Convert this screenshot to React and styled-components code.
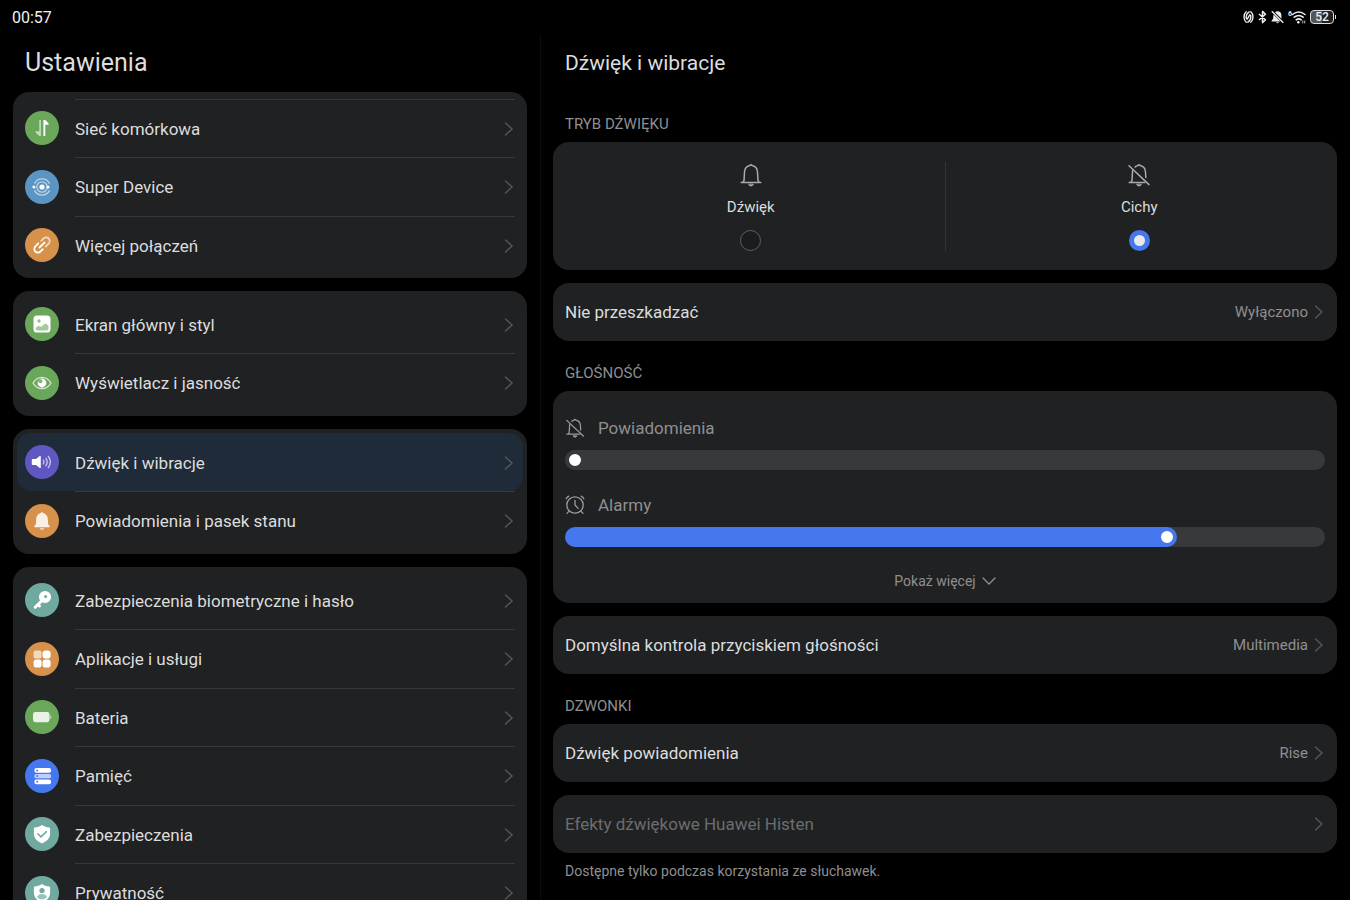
import { useState } from 'react';
import styled, { createGlobalStyle } from 'styled-components';

const GREEN = '#6aa75a';
const ORANGE = '#d6914b';
const TEAL = '#6fa9a0';
const BLUE = '#4577ee';

const MobileDataIcon = () => (
  <svg viewBox="0 0 34 34" fill="#fff">
    <path d="M14.300 9h1.600v16h-1.600c-1.500-1.200-2.700-2.400-3.700-3.600-.5-.7 0-1.200.8-1.200h2.900z" opacity="0.6" />
    <path d="M18.400 9h1.700c1.500 1.200 2.600 2.300 3.600 3.500.5.7 0 1.200-.8 1.200h-2.600V25h-1.900z" />
  </svg>
);

const SuperDeviceIcon = () => (
  <svg viewBox="0 0 34 34" fill="none" stroke="#fff">
    <circle cx="17" cy="17" r="2.600" fill="#fff" stroke="none" />
    <circle cx="17" cy="17" r="5.200" strokeWidth="1.300" opacity="0.6" />
    <path d="M9.500 13.600a8.300 8.300 0 0 1 15 0M9.500 20.400a8.300 8.300 0 0 0 15 0" strokeWidth="1.300" opacity="0.6" />
    <circle cx="8.900" cy="17" r="1.500" fill="#fff" stroke="none" />
    <circle cx="23" cy="17" r="1.500" fill="#fff" stroke="none" />
  </svg>
);

const LinkIcon = () => (
  <svg viewBox="0 0 34 34" fill="none" stroke="#fff" strokeWidth="1.800" strokeLinecap="round">
    <path d="M16.200 12.800l2.300-2.300a3.600 3.600 0 0 1 5.100 5.100l-2.900 2.900" opacity="0.65" />
    <path d="M17.800 21.200l-2.300 2.300a3.600 3.600 0 0 1-5.100-5.100l2.900-2.900" />
    <path d="M14.500 19.500l5-5" />
  </svg>
);

const PictureIcon = () => (
  <svg viewBox="0 0 34 34">
    <rect x="8.500" y="8.500" width="17" height="17" rx="3.600" fill="#fff" />
    <circle cx="14" cy="14" r="1.700" fill={GREEN} opacity="0.7" />
    <path d="M10.500 21.500c1-2 2.500-3.200 4.200-2.300 1.400.7 2.400.3 3.200-.9 1.800-2.600 4.500-1.900 5.600 1v2.200a2 2 0 0 1-2 2h-9a2 2 0 0 1-2-2z" fill={GREEN} opacity="0.6" />
  </svg>
);

const EyeIcon = () => (
  <svg viewBox="0 0 34 34">
    <path d="M8 17c2.300-3.800 5.300-5.700 9-5.700s6.700 1.900 9 5.700c-2.300 3.800-5.300 5.700-9 5.700S10.300 20.800 8 17z" fill="none" stroke="#fff" strokeWidth="1.300" opacity="0.75" />
    <circle cx="17" cy="17" r="4.400" fill="#fff" />
    <circle cx="15.400" cy="15.200" r="2" fill={GREEN} opacity="0.85" />
  </svg>
);

const SpeakerIcon = () => (
  <svg viewBox="0 0 34 34" fill="none" stroke="#fff" strokeWidth="1.400" strokeLinecap="round">
    <path d="M8 14h3l3.800-2.900c.6-.4 1-.2 1 .5v10.800c0 .7-.4.9-1 .5L11 20H8c-.8 0-1.200-.4-1.200-1.200v-3.600c0-.8.4-1.200 1.200-1.200z" fill="#fff" stroke="none" />
    <path d="M18.400 15.200c.8 1.200.8 2.400 0 3.600M20.900 13.400c1.700 2.400 1.700 4.800 0 7.200M23.300 11.500c2.700 3.600 2.700 7.400 0 11" opacity="0.65" />
  </svg>
);

const BellSolidIcon = () => (
  <svg viewBox="0 0 34 34" fill="#fff">
    <path d="M17 8.200c.8 0 1.300.4 1.500 1 2.600.7 4.200 2.900 4.300 5.600l.3 5.200 1.500 2.300c.3.600.1 1-.5 1H9.900c-.6 0-.8-.4-.5-1l1.500-2.300.3-5.200c.1-2.700 1.700-4.900 4.300-5.600.2-.6.7-1 1.500-1z" opacity="0.85" />
    <path d="M14.700 24.200h4.600c-.3 1-1.200 1.600-2.300 1.600s-2-.6-2.300-1.600z" opacity="0.7" />
  </svg>
);

const KeyIcon = () => (
  <svg viewBox="0 0 34 34" fill="none" stroke="#fff">
    <path d="M17.500 17l-7.300 7.300M13 21.500l1.500 1.500" strokeWidth="3" strokeLinecap="round" />
    <circle cx="20" cy="14" r="4" strokeWidth="4.200" />
    <circle cx="20" cy="14" r="2.400" fill="#fff" stroke="none" />
    <circle cx="20.600" cy="13.400" r="1.500" fill={TEAL} stroke="none" />
  </svg>
);

const AppsIcon = () => (
  <svg viewBox="0 0 34 34" fill="#fff">
    <rect x="8.600" y="8.600" width="8" height="8" rx="2.200" opacity="0.65" />
    <rect x="17.600" y="8.600" width="8" height="8" rx="2.800" />
    <rect x="8.600" y="17.600" width="8" height="8" rx="2.800" />
    <rect x="17.600" y="17.600" width="8" height="8" rx="2.800" />
  </svg>
);

const BatteryIcon = () => (
  <svg viewBox="0 0 34 34" fill="#fff">
    <rect x="8" y="12" width="16.500" height="10.200" rx="2.400" opacity="0.85" />
    <path d="M25.200 15c.9.300 1.200 1 1.200 2.100s-.3 1.800-1.200 2.100z" opacity="0.6" />
  </svg>
);

const StorageIcon = () => (
  <svg viewBox="0 0 34 34" fill="#fff">
    <rect x="9.500" y="9" width="16.500" height="4.800" rx="1.800" />
    <rect x="9.500" y="14.900" width="16.500" height="4.400" rx="1.600" opacity="0.65" />
    <rect x="9.500" y="20.400" width="16.500" height="4.800" rx="1.800" />
    <g fill={BLUE}>
      <circle cx="12.200" cy="11.400" r="1" />
      <circle cx="12.200" cy="17.100" r="1" />
      <circle cx="12.200" cy="22.800" r="1" />
    </g>
  </svg>
);

const SHIELD = 'M17 8c2.300 1.600 4.700 2.400 7.200 2.600.6.100.9.400.9 1v5c0 4.600-2.900 7.900-8.100 9.800-5.200-1.900-8.100-5.200-8.100-9.800v-5c0-.6.300-.9.900-1 2.500-.2 4.900-1 7.200-2.600z';

const ShieldCheckIcon = () => (
  <svg viewBox="0 0 34 34">
    <path d={SHIELD} fill="#fff" />
    <path d="M12.800 16.800l3.200 3.100 5.400-5.300" fill="none" stroke={TEAL} strokeWidth="1.500" strokeLinecap="round" />
  </svg>
);

const ShieldUserIcon = () => (
  <svg viewBox="0 0 34 34">
    <path d={SHIELD} fill="#fff" />
    <circle cx="17" cy="14.500" r="2.600" fill={TEAL} />
    <path d="M12.200 21.200c0-2 2-3.300 4.800-3.300s4.800 1.300 4.800 3.300c-1 1.400-2.700 2.200-4.800 2.200s-3.800-.8-4.800-2.200z" fill={TEAL} opacity="0.7" />
  </svg>
);

const BellOutlineIcon = ({ muted }) => (
  <svg viewBox="0 0 24 24" fill="none" stroke="currentColor" strokeWidth="1.500" strokeLinecap="round" strokeLinejoin="round">
    {muted ? (
      <>
        <path d="M8.200 3.900c.7-.6 1.500-1 2.600-1.300.3-.6.700-.9 1.200-.9s.9.300 1.200.9c3.300.8 5.200 3.200 5.300 6.600l.3 5.300" />
        <path d="M5.800 7.300c-.2.600-.3 1.200-.3 1.900L5 17.500l-1.200 1.900M2.200 19.400h15.500" />
        <path d="M2 2.800l20 18.800" />
      </>
    ) : (
      <path d="M2.200 19.400h19.600M3.800 19.400l1.200-1.900.5-8.300c.1-3.400 2-5.800 5.300-6.600.3-.6.700-.9 1.200-.9s.9.300 1.200.9c3.300.8 5.200 3.200 5.300 6.600l.5 8.300 1.200 1.900" />
    )}
    <path d="M9.700 21.500c.4 1 1.200 1.500 2.300 1.500s1.900-.5 2.300-1.500z" fill="currentColor" strokeWidth="0.800" />
  </svg>
);

const AlarmIcon = () => (
  <svg viewBox="0 0 24 24" fill="none" stroke="currentColor" strokeWidth="1.600" strokeLinecap="round">
    <circle cx="12" cy="12" r="9.800" />
    <path d="M12 6.500V12l3.700 4M1.500 4.600c.5-1.500 1.600-2.600 3-3.100M22.500 4.600c-.5-1.500-1.600-2.600-3-3.100M4.600 19.600l-2.200 2.400M19.400 19.600l2.200 2.400" />
  </svg>
);

const Chevron = () => (
  <ChevronSvg viewBox="0 0 12 18" aria-hidden="true">
    <path d="M2.500 3l6.500 6-6.500 6" />
  </ChevronSvg>
);

const groups = [
  {
    scrolled: true,
    items: [
      { name: 'Sieć komórkowa', color: GREEN, icon: MobileDataIcon },
      { name: 'Super Device', color: '#5b95c3', icon: SuperDeviceIcon },
      { name: 'Więcej połączeń', color: ORANGE, icon: LinkIcon },
    ],
  },
  {
    items: [
      { name: 'Ekran główny i styl', color: GREEN, icon: PictureIcon },
      { name: 'Wyświetlacz i jasność', color: GREEN, icon: EyeIcon },
    ],
  },
  {
    items: [
      { name: 'Dźwięk i wibracje', color: '#5f58c2', icon: SpeakerIcon },
      { name: 'Powiadomienia i pasek stanu', color: ORANGE, icon: BellSolidIcon },
    ],
  },
  {
    items: [
      { name: 'Zabezpieczenia biometryczne i hasło', color: TEAL, icon: KeyIcon },
      { name: 'Aplikacje i usługi', color: ORANGE, icon: AppsIcon },
      { name: 'Bateria', color: GREEN, icon: BatteryIcon },
      { name: 'Pamięć', color: BLUE, icon: StorageIcon },
      { name: 'Zabezpieczenia', color: TEAL, icon: ShieldCheckIcon },
      { name: 'Prywatność', color: TEAL, icon: ShieldUserIcon },
    ],
  },
];

const StatusBar = () => (
  <Status>
    <span>00:57</span>
    <StatusIcons>
      <svg width="11" height="14" viewBox="0 0 11 14" fill="none" stroke="#eee" strokeWidth="1.400" strokeLinecap="round">
        <path d="M3.200 1.800C.3 4.200.3 9.800 3.200 12.200M7.800 1.800c2.900 2.400 2.900 8 0 10.400M3.300 8.500c-.5-3 .6-5.200 2.900-6.700M7.700 5.500c.5 3-.6 5.200-2.900 6.700M4.200 9.200l2.600-4.400" />
      </svg>
      <svg width="9" height="14" viewBox="0 0 9 14" fill="none" stroke="#eee" strokeWidth="1.500" strokeLinejoin="round">
        <path d="M1 4l6.500 5.800-3 2.800V1.400l3 2.800L1 10" />
      </svg>
      <svg width="13" height="14" viewBox="0 0 13 14" fill="#eee">
        <path d="M4 2.300C5.500.8 8 .8 9.300 2.300c.9 1 1.100 2.200 1.100 3.600l.1 2.900zM2.500 4.500l7 7H.8c-.4 0-.5-.4-.2-.8l1.500-1.900zM5 12.200h3c-.6 1.300-2.400 1.300-3 0z" />
        <path d="M.8 1.200l11.500 11.600" stroke="#eee" strokeWidth="1.300" />
      </svg>
      <svg width="18" height="14" viewBox="0 0 18 14" fill="none" stroke="#eee" strokeWidth="1.600" strokeLinecap="round">
        <path d="M4.500 4.500c4-3.200 8.500-3.200 12.500 0M6.300 7.200c2.800-2.200 6-2.200 8.800 0M8.200 9.800c1.600-1.200 3.400-1.200 5 0" />
        <circle cx="10.300" cy="12.200" r="1.300" fill="#eee" stroke="none" />
        <path d="M14.800 13v-2M16.700 13v-2" strokeWidth="0.800" />
        <text x="0" y="6" fontSize="7" fontWeight="700" fill="#eee" stroke="none">6</text>
      </svg>
      <BatteryLevel>
        <BatteryBody>52</BatteryBody>
        <BatteryCap />
      </BatteryLevel>
    </StatusIcons>
  </Status>
);

const VolumeSlider = ({ id, label, icon, initial, muted }) => {
  const [value, setValue] = useState(initial);

  return (
    <VolumeItem>
      <VolumeLabel htmlFor={id}>
        {icon}
        {label}
      </VolumeLabel>
      <Range
        id={id}
        type="range"
        min="0"
        max="15"
        value={value}
        onChange={(e) => setValue(Number(e.target.value))}
        $muted={muted}
        style={{ '--level': value / 15 }}
      />
    </VolumeItem>
  );
};

const App = () => {
  const [selected, setSelected] = useState('Dźwięk i wibracje');
  const [mode, setMode] = useState('silent');

  return (
    <Screen>
      <GlobalStyle />
      <StatusBar />
      <Panes>
        <Sidebar>
          <SidebarTitle>Ustawienia</SidebarTitle>
          <Menu>
            {groups.map((group) => (
              <MenuGroup key={group.items[0].name} $scrolled={group.scrolled}>
                {group.items.map(({ name, color, icon: Icon }) => (
                  <MenuItem
                    key={name}
                    href="#"
                    onClick={() => setSelected(name)}
                    $active={name === selected}
                  >
                    <IconCircle $color={color}>
                      <Icon />
                    </IconCircle>
                    <MenuBody>
                      {name}
                      <Chevron />
                    </MenuBody>
                  </MenuItem>
                ))}
              </MenuGroup>
            ))}
          </Menu>
        </Sidebar>

        <Content>
          <ContentTitle>Dźwięk i wibracje</ContentTitle>

          <SectionLabel>TRYB DŹWIĘKU</SectionLabel>
          <Stack>
            <ModeCard>
              <ModeOption>
                <BellOutlineIcon />
                Dźwięk
                <Radio type="radio" name="mode" checked={mode === 'sound'} onChange={() => setMode('sound')} />
              </ModeOption>
              <ModeOption>
                <BellOutlineIcon muted />
                Cichy
                <Radio type="radio" name="mode" checked={mode === 'silent'} onChange={() => setMode('silent')} />
              </ModeOption>
            </ModeCard>
            <SettingRow type="button">
              Nie przeszkadzać
              <Value>Wyłączono</Value>
              <Chevron />
            </SettingRow>
          </Stack>

          <SectionLabel>GŁOŚNOŚĆ</SectionLabel>
          <Stack>
            <VolumeCard>
              <VolumeSlider id="notifications" label="Powiadomienia" icon={<BellOutlineIcon muted />} initial={0} muted />
              <VolumeSlider id="alarms" label="Alarmy" icon={<AlarmIcon />} initial={12} />
              <ShowMore type="button">
                Pokaż więcej
                <svg width="14" height="10" viewBox="0 0 14 10" fill="none" stroke="currentColor" strokeWidth="1.300" strokeLinecap="round">
                  <path d="M1 2l6 6 6-6" />
                </svg>
              </ShowMore>
            </VolumeCard>
            <SettingRow type="button">
              Domyślna kontrola przyciskiem głośności
              <Value>Multimedia</Value>
              <Chevron />
            </SettingRow>
          </Stack>

          <SectionLabel>DZWONKI</SectionLabel>
          <Stack>
            <SettingRow type="button">
              Dźwięk powiadomienia
              <Value>Rise</Value>
              <Chevron />
            </SettingRow>
            <SettingRow type="button" disabled>
              Efekty dźwiękowe Huawei Histen
              <Value />
              <Chevron />
            </SettingRow>
          </Stack>
          <Note>Dostępne tylko podczas korzystania ze słuchawek.</Note>
        </Content>
      </Panes>
    </Screen>
  );
};

export default App;

const GlobalStyle = createGlobalStyle`
  * {
    box-sizing: border-box;
  }

  body {
    margin: 0;
    background: #000;
    color: #dcdddd;
    font-family: Roboto, 'Noto Sans', sans-serif;
  }

  button {
    border: 0;
    font: inherit;
    color: inherit;
    cursor: pointer;
  }
`;

const Screen = styled.div`
  height: 100vh;
  display: flex;
  flex-direction: column;
`;

const Status = styled.header`
  height: 34px;
  flex-shrink: 0;
  padding: 0 14px 0 12px;
  display: flex;
  align-items: center;
  justify-content: space-between;

  font-size: 16px;
  color: #f0f0f0;
`;

const StatusIcons = styled.div`
  display: flex;
  align-items: center;
  gap: 4px;
`;

const BatteryLevel = styled.span`
  display: flex;
  align-items: center;
  gap: 1px;
`;

const BatteryBody = styled.span`
  width: 24px;
  height: 14px;

  border: 1px solid #ddd;
  border-radius: 4px;
  background: linear-gradient(90deg, #555 52%, #222 52%);

  font-size: 12px;
  font-weight: 500;
  line-height: 13px;
  text-align: center;
`;

const BatteryCap = styled.span`
  width: 1px;
  height: 4px;
  background: #ddd;
`;

const Panes = styled.main`
  flex: 1 1 0;
  min-height: 0;
  display: grid;
  grid-template-columns: 2fr 3fr;
`;

const Sidebar = styled.nav`
  min-height: 0;
  display: flex;
  flex-direction: column;
`;

const SidebarTitle = styled.h1`
  flex-shrink: 0;
  margin: 0;
  padding: 0 25px;

  font-size: 25px;
  font-weight: 400;
  line-height: 58px;
`;

const Menu = styled.div`
  flex: 1 1 0;
  min-height: 0;
  padding: 0 13px;
  display: flex;
  flex-direction: column;
  gap: 13px;

  overflow-y: auto;
  scrollbar-width: none;
`;

const MenuBody = styled.span`
  flex: 1 1 0;
  align-self: stretch;
  display: flex;
  align-items: center;
  justify-content: space-between;

  border-top: 1px solid transparent;
`;

const MenuItem = styled.a`
  height: 58px;
  padding: 0 8px;
  display: flex;
  align-items: center;
  gap: 16px;

  border-radius: 14px;
  background: ${({ $active }) => ($active ? '#202b39' : 'transparent')};
  color: inherit;
  font-size: 17px;
  text-decoration: none;

  &:nth-child(even) {
    height: 59px;
  }

  &:not(:first-child) ${MenuBody} {
    border-color: #38393b;
  }
`;

const MenuGroup = styled.div`
  flex-shrink: 0;
  padding: ${({ $scrolled }) => ($scrolled ? '7px 4px 4px' : '4px')};

  border-radius: 16px;
  background: #202123;

  ${MenuBody} {
    ${({ $scrolled }) => $scrolled && 'border-color: #38393b;'}
  }
`;

const IconCircle = styled.span`
  width: 34px;
  height: 34px;
  flex-shrink: 0;

  border-radius: 50%;
  background: ${({ $color }) => $color};

  > svg {
    display: block;
  }
`;

const ChevronSvg = styled.svg`
  width: 12px;
  height: 18px;
  flex-shrink: 0;

  fill: none;
  stroke: #545557;
  stroke-width: 1.5;
  stroke-linecap: round;
`;

const Content = styled.section`
  min-height: 0;
  padding: 0 13px 12px 12px;

  border-left: 1px solid #0d0d0d;

  overflow-y: auto;
  scrollbar-width: none;
`;

const ContentTitle = styled.h2`
  margin: 0;
  padding: 0 12px;

  font-size: 21px;
  font-weight: 400;
  line-height: 58px;
`;

const SectionLabel = styled.h3`
  margin: 0;
  padding: 22px 12px 8px;

  font-size: 15px;
  font-weight: 400;
  line-height: 20px;
  color: #8f8f90;
`;

const Stack = styled.div`
  display: flex;
  flex-direction: column;
  gap: 13px;
`;

const Card = styled.div`
  border-radius: 16px;
  background: #202123;
`;

const ModeCard = styled(Card)`
  padding: 20px 4px 19px;
  display: flex;
`;

const ModeOption = styled.label`
  flex: 1 1 0;
  display: flex;
  flex-direction: column;
  align-items: center;

  font-size: 15px;
  line-height: 20px;

  & + & {
    border-left: 1px solid #343537;
  }

  > svg {
    width: 24px;
    height: 24px;
    margin: 1px 0 10px;
    color: #a9aaab;
  }
`;

const Radio = styled.input`
  appearance: none;
  width: 21px;
  height: 21px;
  margin: 13px 0 0;

  border: 1px solid #606163;
  border-radius: 50%;
  background: #1b1c1d;

  &:checked {
    border: 5px solid ${BLUE};
    background: #e8e9ee;
  }
`;

const SettingRow = styled.button`
  width: 100%;
  height: 58px;
  padding: 0 12px;
  display: flex;
  align-items: center;
  gap: 5px;

  border-radius: 16px;
  background: #202123;
  font-size: 17px;
  text-align: left;

  &:disabled {
    color: #6c6d6f;
    cursor: default;
  }
`;

const Value = styled.span`
  flex: 1 1 0;

  font-size: 15px;
  text-align: right;
  color: #8f8f90;
`;

const VolumeCard = styled(Card)`
  padding: 24px 12px 0;
  display: flex;
  flex-direction: column;
`;

const VolumeItem = styled.div`
  display: flex;
  flex-direction: column;
  gap: 9px;

  & + & {
    margin-top: 22px;
  }
`;

const VolumeLabel = styled.label`
  height: 26px;
  display: flex;
  align-items: center;
  gap: 13px;

  font-size: 17px;
  color: #8f8f90;

  > svg {
    width: 20px;
    height: 20px;
    color: #9a9b9c;
  }
`;

const Range = styled.input`
  --fill: ${({ $muted }) => ($muted ? '#38393b' : BLUE)};

  appearance: none;
  width: 100%;
  height: 20px;
  margin: 0;

  border-radius: 10px;
  background: linear-gradient(
    90deg,
    var(--fill) calc(var(--level) * (100% - 20px) + 10px),
    #38393b calc(var(--level) * (100% - 20px) + 10px)
  );

  &::-webkit-slider-thumb {
    appearance: none;
    width: 20px;
    height: 20px;

    border: 4px solid var(--fill);
    border-radius: 50%;
    background: #fff;
  }
`;

const ShowMore = styled.button`
  height: 44px;
  margin-top: 12px;
  padding: 0;
  align-self: center;
  display: flex;
  align-items: center;
  gap: 6px;

  background: none;
  font-size: 14px;
  color: #8f8f90;
`;

const Note = styled.p`
  margin: 0;
  padding: 8px 12px;

  font-size: 14px;
  line-height: 20px;
  color: #8f8f90;
`;
